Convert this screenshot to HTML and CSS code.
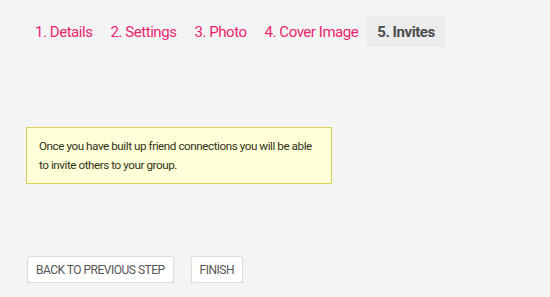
FILE: index.html
```html
<!DOCTYPE html>
<html>
<head>
<meta charset="utf-8">
<link rel="stylesheet" href="styles.css">
</head>
<body>
<div class="page">
  <nav class="tabs">
    <a class="tab">1. Details</a>
    <a class="tab">2. Settings</a>
    <a class="tab">3. Photo</a>
    <a class="tab">4. Cover Image</a>
    <a class="tab active">5. Invites</a>
  </nav>
  <div class="notice">Once you have built up friend connections you will be able to invite others to your group.</div>
  <div class="actions">
    <button class="btn back">Back to Previous Step</button>
    <button class="btn">Finish</button>
  </div>
</div>
</body>
</html>
```
FILE: styles.css
```css
html, body {
  margin: 0;
  padding: 0;
  background: #f4f4f4;
  font-family: Roboto, "Liberation Sans", sans-serif;
}
.page {
  padding: 16px 0 0 26px;
}
.tabs {
  display: flex;
  height: 31px;
}
.tab {
  display: flex;
  align-items: center;
  padding: 0 9px;
  font-size: 15px;
  letter-spacing: -0.45px;
  color: #e8266e;
}
.tab.active {
  background: #ececec;
  color: #4d4d4d;
  font-weight: bold;
  padding: 0 10px;
}
.notice {
  margin-top: 80px;
  width: 280px;
  padding: 9px 12px 8px;
  background: #ffffd8;
  border: 1px solid #d8cf5f;
  font-size: 11.7px;
  letter-spacing: -0.45px;
  line-height: 19px;
  color: #33331a;
}
.actions {
  display: flex;
  gap: 17px;
  margin-top: 72px;
  margin-left: 1px;
}
.btn {
  font-family: Roboto, "Liberation Sans", sans-serif;
  font-size: 12px;
  letter-spacing: -0.5px;
  text-transform: uppercase;
  color: #555;
  background: #fff;
  border: 1px solid #e2dcdf;
  border-radius: 3px;
  box-shadow: 0 1px 1px #f0b7cb;
  height: 27px;
  padding: 0 8px;
}
```
